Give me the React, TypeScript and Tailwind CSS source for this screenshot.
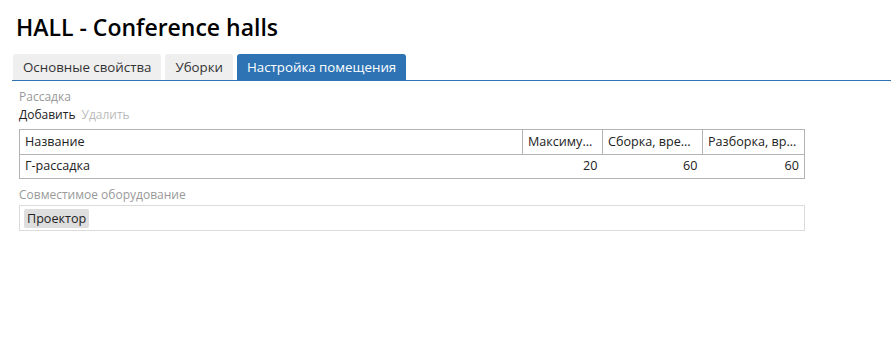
const tabs = ["Основные свойства", "Уборки", "Настройка помещения"];

export default function App() {
  return (
    <div className="min-h-screen bg-white text-[#222] font-['Open_Sans',sans-serif]">
      <h1 className="pl-[16px] pt-[12px] text-[23px] font-semibold leading-[30px] text-black">
        HALL - Conference halls
      </h1>
      <div className="ml-[12px] mt-[12px] flex gap-[4px] border-b border-[#2e74b5] pl-[1px]">
        {tabs.map((t, i) => (
          <div
            key={t}
            className={`h-[26px] rounded-t-[3px] px-[10px] text-[13.3px] leading-[26px] ${
              i === 2 ? "bg-[#2e74b5] text-white" : "bg-[#efefef] text-[#333]"
            }`}
          >
            {t}
          </div>
        ))}
      </div>
      <div className="w-[786px] pl-[19px] pt-[7px] box-content">
        <div className="text-[12px] leading-[18px] text-[#999]">Рассадка</div>
        <div className="flex gap-[6px] text-[12px] leading-[18px]">
          <span className="text-[#222]">Добавить</span>
          <span className="text-[#bbb]">Удалить</span>
        </div>
        <table className="mt-[5px] w-full table-fixed border-collapse border border-[#b4b4b4] text-[12.6px]">
          <colgroup>
            <col />
            <col className="w-[80px]" />
            <col className="w-[100px]" />
            <col className="w-[102px]" />
          </colgroup>
          <thead>
            <tr className="h-[25px] border-b border-[#b4b4b4]">
              <th className="px-[5px] text-left font-normal">Название</th>
              <th className="truncate border-l border-[#b4b4b4] px-[5px] text-left font-normal">Максимум человек</th>
              <th className="truncate border-l border-[#b4b4b4] px-[5px] text-left font-normal">Сборка, время, мин</th>
              <th className="truncate border-l border-[#b4b4b4] px-[5px] text-left font-normal">Разборка, время, мин</th>
            </tr>
          </thead>
          <tbody>
            <tr className="h-[24px]">
              <td className="px-[5px]">Г-рассадка</td>
              <td className="px-[5px] text-right">20</td>
              <td className="px-[5px] text-right">60</td>
              <td className="px-[5px] text-right">60</td>
            </tr>
          </tbody>
        </table>
        <div className="mt-[7px] text-[12px] leading-[18px] text-[#999]">Совместимое оборудование</div>
        <div className="mt-[1px] flex h-[26px] items-center border border-[#dcdcdc] px-[4px]">
          <span className="rounded-[2px] bg-[#dedede] px-[3px] text-[12.6px] leading-[19px] text-[#222]">Проектор</span>
        </div>
      </div>
    </div>
  );
}
